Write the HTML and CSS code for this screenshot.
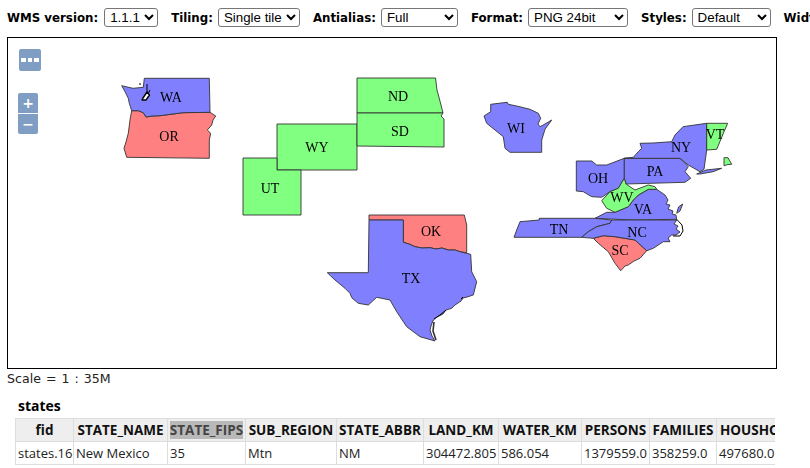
FILE: index.html
```html
<!DOCTYPE html>
<html lang="en">
<head>
<meta charset="utf-8">
<title>WMS preview</title>
<link rel="stylesheet" href="styles.css">
</head>
<body>
<div class="toolbar">
  <label class="field">WMS version: <select class="sel sel-version"><option>1.1.1</option></select></label>
  <label class="field">Tiling: <select class="sel sel-tiling"><option>Single tile</option></select></label>
  <label class="field">Antialias: <select class="sel sel-aa"><option>Full</option></select></label>
  <label class="field">Format: <select class="sel sel-format"><option>PNG 24bit</option></select></label>
  <label class="field">Styles: <select class="sel sel-styles"><option>Default</option></select></label>
  <label class="field">Width/Height:</label>
</div>
<div class="map">
  <svg class="states" viewBox="8 38 768 330" width="768" height="330" aria-label="Map of US states">
    <g class="s-red">
      <path d="M131.7 110.7L138.3 110.7 143.3 112.7 146 117 152 116 160 115.7 183 112.7 210 112.3 215.7 116 213 120 211.7 125 207.3 130 210.7 133.3 209.3 140 209.3 158.3 126.7 157.3 124 148.3 126 142 128.3 133.3 130 120Z"/>
      <path d="M369 215L464.3 215 466.7 225 466.7 252.7 460 251.7 455 250 448.3 250 442 248 436 249 430 247.7 422 248 415 246.7 409 244 403.3 242.3 403.3 220 369 220Z"/>
      <path d="M593.3 238.3L603.3 235.7 615 236.7 635 240 646.7 250.7 640 258.3 634 261 628.3 265 625 266 620.7 270.7 615 263.3 608.3 251.7 598.3 243.3Z"/>
    </g>
    <g class="s-blue">
      <path d="M144.3 78.3L209.3 78.3 210 112.3 183 112.7 160 115.7 152 116 146 117 143.3 112.7 138.3 110.7 131.7 110.7 129.3 103.3 128.3 98.3 125 91.7 121.7 85.7 133 88.3 143.3 87.3Z"/>
      <path d="M369 220L403.3 220 403.3 242.3 409 244 415 246.7 422 248 430 247.7 436 249 442 248 448.3 250 455 250 460 251.7 470.7 254.3 471.7 271.7 476.7 281.7 473.3 295 467 297 463 298 461 301 455 305 451.7 308.3 446 310 443 314 437 317 433.3 320 431 326 430 330 432 336 435 341 420 336.7 406.7 326.7 396.7 311.7 390 300 376.7 297.3 368.3 305 358.3 303.3 352 298 350 293.3 345 288.3 335 280 327.3 272.7 368.3 272.7Z"/>
      <path d="M490.7 104.3L507.3 102.3 508.3 104.3 516.7 106 530 109.3 538.3 113.3 540.7 118.3 538 124 540 126.7 545 124 551.7 120 545 129.3 541.7 140 541.7 152.3 510 152.3 505 148.3 503.3 136.7 495 130 486.7 123.3 484 116 490.7 111.7Z"/>
      <path d="M576.3 161L591.7 161 596.7 165 606.7 165 624.3 158.3 624.3 178.3 618.3 188.3 610 191.7 601.7 197.3 591.7 196.7 583.3 191.7 576.3 191Z"/>
      <path d="M624.3 158.3L680 158.3 688.3 166.7 685 171.7 690.7 178.3 685 182.3 626 184 624.3 178.3Z"/>
      <path d="M633.3 157.3L638.3 151.7 641.7 148.3 640 143.3 653 143 671.7 141.7 675 135 683 126.7 706.7 123.3 706.7 150 704 169.3 700 171.7 688.3 165 680 158.3 624.3 158.3Z"/>
      <path d="M696.7 174L706 170 721.7 168.3 713 171.7 700 174Z"/>
      <path d="M595 218.3L606.7 212.3 615 212.3 628.3 206.7 633.3 200 638.3 195 648.3 189.3 656.7 189.3 665 195 668 200 666 204 670 205 668 209 673 211 672 214 676 215 676.7 219.3 633.3 220Z"/>
      <path d="M682.7 204L680 211 676.7 213.3 678.5 207Z"/>
      <path d="M520 221.7L539.3 220 539.3 218.3 595 218.3 611.7 220 610 223.3 596.7 226.7 588.3 231.7 581.7 237.3 514 237.3 516.7 230Z"/>
      <path d="M611.7 220L676.7 220 674 224 678 226 676 229 680 232 676 235 671.7 235 668 238 670 241.7 663.3 241.7 653.3 248.3 646.7 250.7 635 240 615 236.7 603.3 235.7 593.3 238.3 581.7 237.3 588.3 231.7 596.7 226.7 610 223.3Z"/>
    </g>
    <g class="s-green">
      <path d="M277 124L357 124 357 170 277 170Z"/>
      <path d="M243 158L277 158 277 170 301 170 301 215 243 215Z"/>
      <path d="M357 78L435.5 78 437 90 441 105 443 113 357 113Z"/>
      <path d="M357 113L443 113 441 116 444 119 444 147 357 146Z"/>
      <path d="M706.7 123.3L727.7 123.3 724 131.7 716.7 149.3 706.7 150Z"/>
      <path d="M724 157.7L728 157.7 731.7 164.3 728 164.5 724 165.7Z"/>
      <path d="M624.3 178.3L626 184 635 190 648.3 185 655 186.7 656.7 189.3 648.3 189.3 638.3 195 633.3 200 628.3 206.7 615 212.3 606.7 208.3 601.7 200.7 610 191.7 618.3 188.3Z"/>
    </g>
    <path class="s-inlet" d="M143 98L147 92 149.5 95 146 100 142 100Z"/>
    <path class="s-line" d="M139 84L141 84M147 84L147 92M150 90L148 94M676.7 219.3L682 225 683 231 680 236 673 236M446 310L440 315 434 319M461 299L463 297"/>
    <path class="s-bar" d="M434 322L433 331 436 340"/>
    <g class="labels">
      <text x="171" y="102">WA</text>
      <text x="169" y="141">OR</text>
      <text x="317" y="152">WY</text>
      <text x="270" y="193">UT</text>
      <text x="398" y="101">ND</text>
      <text x="400" y="136">SD</text>
      <text x="516" y="133">WI</text>
      <text x="681" y="152">NY</text>
      <text x="715" y="139">VT</text>
      <text x="598" y="183">OH</text>
      <text x="655" y="176">PA</text>
      <text x="622" y="202">WV</text>
      <text x="643" y="214">VA</text>
      <text x="559" y="234">TN</text>
      <text x="637" y="237">NC</text>
      <text x="620" y="255">SC</text>
      <text x="431" y="236">OK</text>
      <text x="411" y="283">TX</text>
    </g>
  </svg>
  <button class="ctl ctl-more" type="button" aria-label="Options"><i></i><i></i><i></i></button>
  <div class="zoom">
    <button class="ctl ctl-in" type="button">+</button>
    <button class="ctl ctl-out" type="button">−</button>
  </div>
</div>
<div class="scale">Scale = 1 : 35M</div>
<div class="panel">
  <h4 class="layer">states</h4>
  <div class="clip">
    <table class="attrs">
      <colgroup>
        <col class="c1"><col class="c2"><col class="c3"><col class="c4"><col class="c5"><col class="c6"><col class="c7"><col class="c8"><col class="c9"><col class="c10">
      </colgroup>
      <thead>
        <tr>
          <th>fid</th><th>STATE_NAME</th><th><span class="hl">STATE_FIPS</span></th><th>SUB_REGION</th><th>STATE_ABBR</th><th>LAND_KM</th><th>WATER_KM</th><th>PERSONS</th><th>FAMILIES</th><th class="last">HOUSHOLD</th>
        </tr>
      </thead>
      <tbody>
        <tr>
          <td>states.16</td><td>New Mexico</td><td>35</td><td>Mtn</td><td>NM</td><td>304472.805</td><td>586.054</td><td>1379559.0</td><td>358259.0</td><td>497680.0</td>
        </tr>
      </tbody>
    </table>
  </div>
</div>
</body>
</html>
```
FILE: styles.css
```css
html, body { margin: 0; padding: 0; overflow: hidden; height: 468px; background: #fff; }
body { width: 810px; font-family: "DejaVu Sans", sans-serif; color: #000; }

.toolbar { display: flex; align-items: center; gap: 13px; padding: 8px 0 0 7px; height: 19px; white-space: nowrap; width: 900px; }
.field { font-family: "DejaVu Sans", sans-serif; font-weight: bold; font-size: 11.8px; display: flex; align-items: center; gap: 5px; flex: none; }
.sel { font-family: "Liberation Sans", sans-serif; font-size: 13.33px; height: 19px; padding: 0 0 0 1px; margin: 0; border: 1px solid #767676; border-radius: 3px; background: #fff; color: #000; box-sizing: border-box; }
.sel-version { width: 54px; margin-left: 1px; }
.sel-tiling { width: 82px; }
.sel-aa { width: 77px; }
.sel-format { width: 100px; }
.sel-styles { width: 79px; }

.map { position: relative; width: 768px; height: 330px; margin: 10px 0 0 7px; border: 1px solid #000; }
.states { display: block; filter: blur(0.3px); }
.states path { stroke: #333; stroke-width: 0.9; stroke-linejoin: round; }
.s-red { fill: #ff8080; }
.s-blue { fill: #8080ff; }
.s-green { fill: #80ff80; }
.states .s-inlet { fill: #fff; stroke: #000; stroke-width: 1.4; }
.states .s-line { fill: none; stroke: #000; stroke-width: 1; }
.states .s-bar { fill: none; stroke: #333; stroke-width: 1.6; }
.labels { font-family: "Liberation Serif", serif; font-size: 14px; text-anchor: middle; fill: #000; }

.ctl { border: 0; padding: 0; margin: 0; background: #809dc3; color: #fff; font-family: "DejaVu Sans", sans-serif; font-weight: bold; display: flex; align-items: center; justify-content: center; }
.ctl-more { position: absolute; left: 11px; top: 11px; width: 22px; height: 22px; gap: 2px; border-radius: 2px; }
.ctl-more i { display: block; width: 4.5px; height: 4.5px; background: #fff; }
.zoom { position: absolute; left: 10px; top: 55px; display: flex; flex-direction: column; gap: 1px; }
.ctl-in, .ctl-out { width: 20px; height: 20px; font-size: 14px; line-height: 20px; }
.ctl-in { border-radius: 2px 2px 0 0; }
.ctl-out { border-radius: 0 0 2px 2px; }

.scale { font-size: 12.6px; word-spacing: 1px; line-height: 15px; margin: 2px 0 0 7px; color: #222; }

.panel { margin: 11px 0 0 15px; font-family: "Open Sans", sans-serif; }
.layer { margin: 0 0 4px 3px; font-size: 14px; line-height: 17px; font-weight: bold; }
.clip { width: 760px; overflow: hidden; }
.attrs { border-collapse: collapse; table-layout: fixed; width: 780px; }
.attrs th, .attrs td { border: 1px solid #ddd; height: 22px; white-space: nowrap; overflow: hidden; line-height: 18px; color: #222; }
.attrs th { background: #eee; font-size: 13.5px; font-weight: bold; color: #111; text-align: center; padding: 0; }
.attrs th.last { text-align: left; padding-left: 3px; }
.attrs td { font-size: 13px; text-align: left; padding: 0 0 0 2px; }
.attrs thead tr, .attrs tbody tr { height: 23px; }
.hl { background: #b9b9b9; color: #444; display: inline-block; }
.c1 { width: 58px; }
.c2 { width: 94px; }
.c3 { width: 78px; }
.c4 { width: 91px; }
.c5 { width: 87px; }
.c6 { width: 75px; }
.c7 { width: 83px; }
.c8 { width: 68px; }
.c9 { width: 67px; }
.c10 { width: 79px; }
```
